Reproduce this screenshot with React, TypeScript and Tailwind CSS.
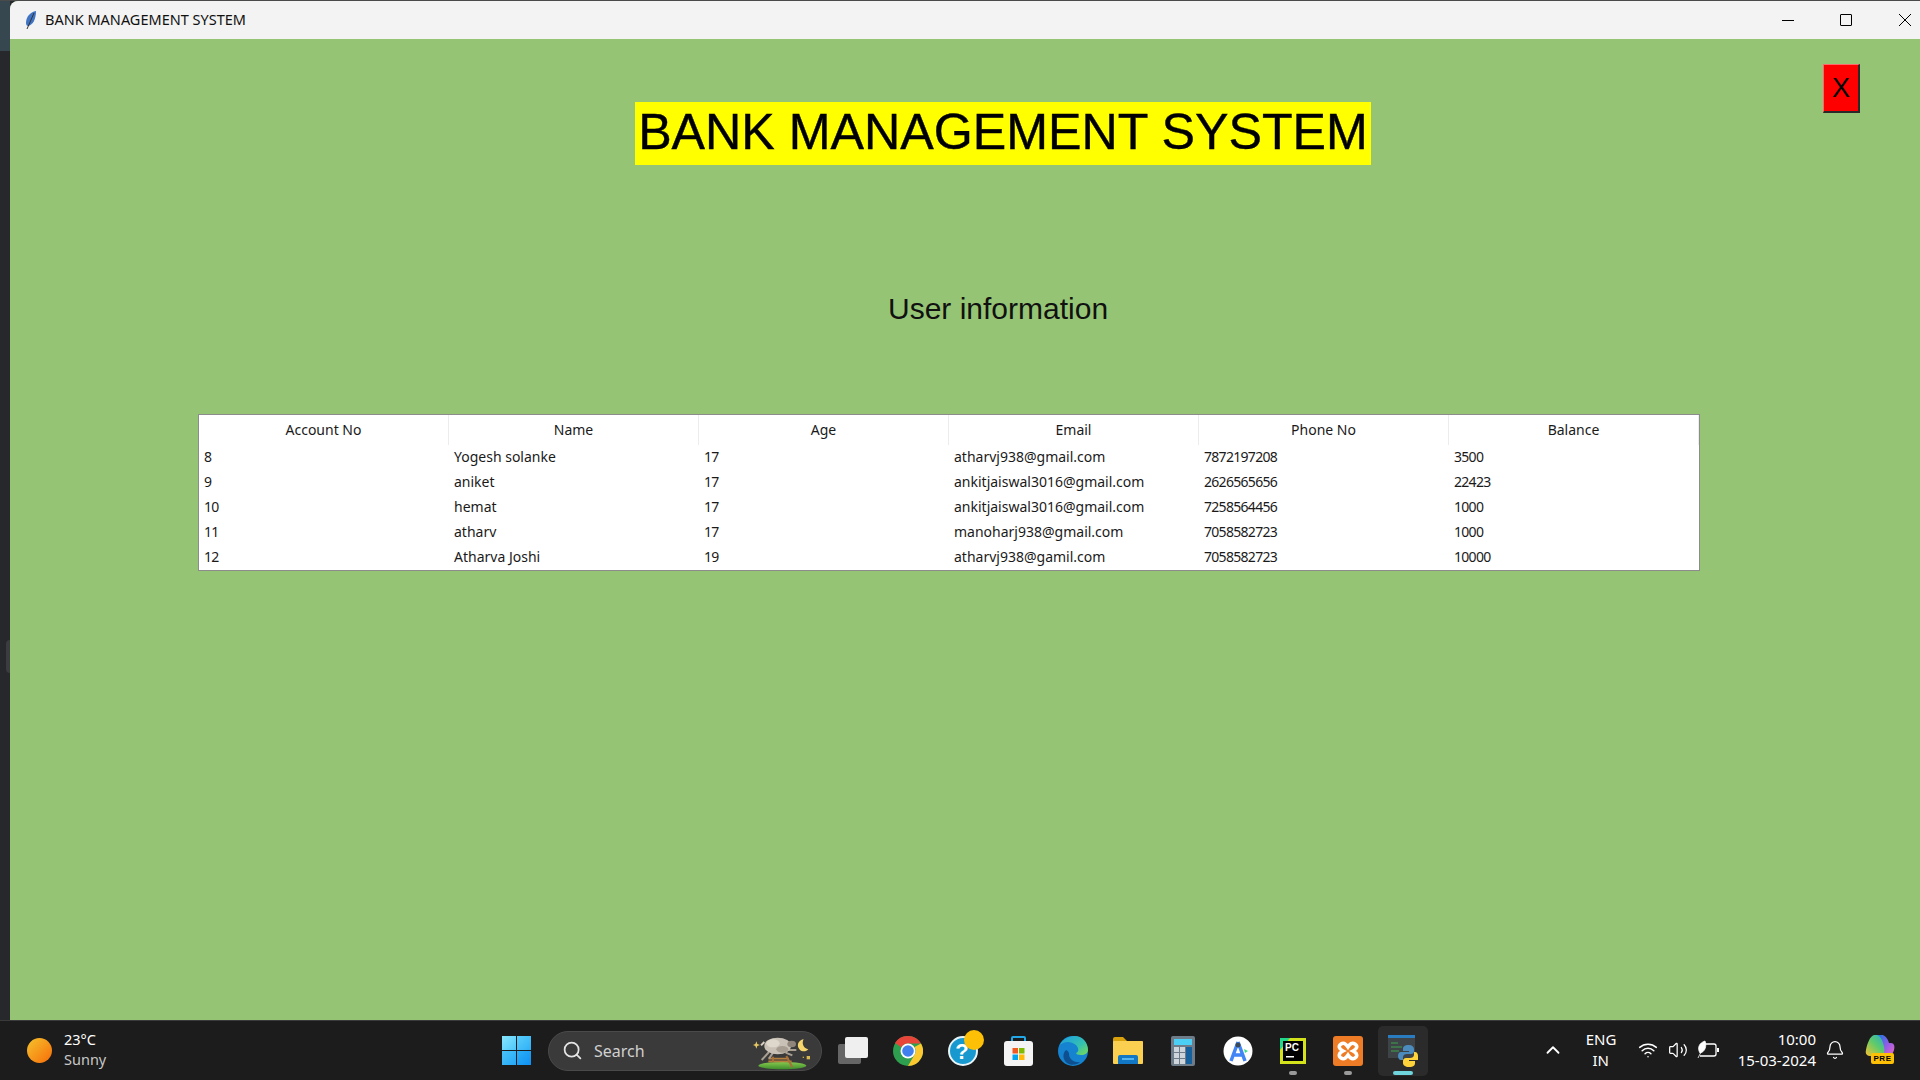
import type { ReactNode } from "react";
import { Bell, ChevronUp, Search, Volume2, Wifi } from "lucide-react";

const columns = ["Account No", "Name", "Age", "Email", "Phone No", "Balance"];

const rows = [
  ["8", "Yogesh solanke", "17", "atharvj938@gmail.com", "7872197208", "3500"],
  ["9", "aniket", "17", "ankitjaiswal3016@gmail.com", "2626565656", "22423"],
  ["10", "hemat", "17", "ankitjaiswal3016@gmail.com", "7258564456", "1000"],
  ["11", "atharv", "17", "manoharj938@gmail.com", "7058582723", "1000"],
  ["12", "Atharva Joshi", "19", "atharvj938@gamil.com", "7058582723", "10000"],
];

const Feather = () => (
  <svg width="14" height="20" viewBox="0 0 14 20">
    <path d="M12 1C6 2 2 7 2 13c0 2 1 3 2 3 5-1 8-7 8-15z" fill="#3f74c4" />
    <path d="M10 3 3 19" stroke="#333" strokeWidth="1" fill="none" />
  </svg>
);

const WinLogo = () => (
  <div className="grid grid-cols-2 gap-[1px] w-[29px] h-[29px]">
    <div className="bg-gradient-to-br from-[#86e6fd] to-[#4cc8fa]" />
    <div className="bg-gradient-to-br from-[#58cefb] to-[#2db0f7]" />
    <div className="bg-gradient-to-br from-[#48c4fa] to-[#25a8f6]" />
    <div className="bg-gradient-to-br from-[#2cb0f7] to-[#0f8ff3]" />
  </div>
);

const Sheep = () => (
  <svg width="60" height="35" viewBox="30 30 180 105">
    <defs>
      <linearGradient id="grass" x1="0" y1="0" x2="0" y2="1">
        <stop offset="0" stopColor="#86c94e" />
        <stop offset="1" stopColor="#3d8c2c" />
      </linearGradient>
    </defs>
    <ellipse cx="118" cy="119" rx="72" ry="11" fill="url(#grass)" />
    <path d="M76 98h62M76 106h70" stroke="#b57f3e" strokeWidth="5" fill="none" />
    <path d="M90 92v16M130 90l18 34" stroke="#a8703a" strokeWidth="6" fill="none" />
    <path d="M78 78 56 102M90 80 78 98M134 72l26 0M128 80l20 8" stroke="#a89e92" strokeWidth="6" fill="none" />
    <ellipse cx="104" cy="60" rx="40" ry="25" fill="#c9c1b6" />
    <ellipse cx="90" cy="52" rx="20" ry="12" fill="#ded7cc" />
    <ellipse cx="118" cy="70" rx="18" ry="10" fill="#a79d91" />
    <ellipse cx="146" cy="54" rx="13" ry="10" fill="#8f857b" />
    <path d="M64 48 54 58" stroke="#d8d0c4" strokeWidth="6" />
    <path d="M182 40a18 18 0 1 0 14 30 20 20 0 0 1-14-30z" fill="#f6d56c" />
    <path d="M40 46l3 8 8 3-8 3-3 8-3-8-8-3 8-3z" fill="#e8c860" />
    <rect x="191" y="90" width="10" height="10" fill="#d8b850" />
    <rect x="179" y="92" width="4" height="4" fill="#c8a840" />
  </svg>
);

const TaskView = () => (
  <svg width="30" height="27" viewBox="0 0 30 27">
    <rect x="0" y="7" width="23" height="20" rx="2" fill="#666666" />
    <rect x="7" y="0" width="23" height="21" rx="2" fill="#efefef" />
  </svg>
);

const Chrome = () => (
  <svg width="30" height="30" viewBox="0 0 30 30">
    <circle cx="15" cy="15" r="15" fill="#2e9e4f" />
    <path d="M15 0a15 15 0 0 1 13 7.500H15a7.500 7.500 0 0 0-6.500 3.750L2 7A15 15 0 0 1 15 0z" fill="#e8453a" />
    <path d="M28 7.500A15 15 0 0 1 15 30l6.500-11.250A7.500 7.500 0 0 0 21.500 11z" fill="#fbc92f" />
    <circle cx="15" cy="15" r="7.500" fill="#fff" />
    <circle cx="15" cy="15" r="5.800" fill="#3f80ee" />
  </svg>
);

const HelpBadge = () => (
  <div className="relative w-[30px] h-[30px]">
    <svg width="30" height="30" viewBox="0 0 30 30">
      <circle cx="15" cy="15" r="14" fill="#1798cf" stroke="#e9f4f8" strokeWidth="2" />
      <text x="14" y="23" textAnchor="middle" fontSize="22" fontWeight="700" fill="#fff" fontFamily="Liberation Sans, sans-serif">?</text>
    </svg>
    <div className="absolute left-[16px] top-[-6px] w-[20px] h-[20px] rounded-full bg-[#fdc006]" />
  </div>
);

const Store = () => (
  <svg width="29" height="30" viewBox="0 0 29 30">
    <path d="M8 7V2a1 1 0 0 1 1-1h11a1 1 0 0 1 1 1v5" stroke="#22a7e8" strokeWidth="2" fill="none" />
    <rect x="0" y="5" width="29" height="25" rx="3" fill="#f4f4f4" />
    <rect x="8.500" y="12" width="5.500" height="5.500" fill="#f05a22" />
    <rect x="15" y="12" width="5.500" height="5.500" fill="#80bb02" />
    <rect x="8.500" y="18.500" width="5.500" height="5.500" fill="#04a5f0" />
    <rect x="15" y="18.500" width="5.500" height="5.500" fill="#ffba08" />
  </svg>
);

const Edge = () => (
  <svg width="30" height="30" viewBox="0 0 30 30">
    <defs>
      <linearGradient id="edgeTop" x1="0" y1="0" x2="1" y2="1">
        <stop offset="0" stopColor="#1b9de2" />
        <stop offset="0.6" stopColor="#35c1b0" />
        <stop offset="1" stopColor="#7bdc4e" />
      </linearGradient>
    </defs>
    <circle cx="15" cy="15" r="15" fill="#1583cf" />
    <path d="M2 9C5 2 12 0 17 0c7 0 13 6 13 14 0 3-3 5-7 5-3 0-5-1-5-2 3-1 3-5 0-8C13 5 6 5 2 9z" fill="url(#edgeTop)" />
    <path d="M11 18c0 5 5 9 11 8-3 3-9 4-13 1-4-3-5-9-1-13 2 1 3 2 3 4z" fill="#0d4f8f" />
  </svg>
);

const Folder = () => (
  <svg width="30" height="27" viewBox="0 0 30 27">
    <path d="M0 2a2 2 0 0 1 2-2h8l4 4h14a2 2 0 0 1 2 2v4H0z" fill="#d9a20c" />
    <rect x="0" y="4" width="30" height="23" rx="1" fill="#fbcf4f" />
    <path d="M5 27v-7a2 2 0 0 1 2-2h16a2 2 0 0 1 2 2v7z" fill="#1277c4" />
    <rect x="9" y="21" width="12" height="2" fill="#52b5f2" />
  </svg>
);

const Calc = () => (
  <svg width="24" height="30" viewBox="0 0 24 30">
    <rect x="0" y="0" width="24" height="30" rx="2" fill="#6d7c88" />
    <rect x="3" y="3" width="18" height="6" fill="#4bcff5" />
    {[11, 17, 23].map((y) =>
      [3, 9].map((x) => <rect key={`${x}-${y}`} x={x} y={y} width="5" height="5" fill="#cfd6db" />)
    )}
    <rect x="15" y="11" width="6" height="17" fill="#17609e" />
  </svg>
);

const AndroidStudio = () => (
  <svg width="30" height="30" viewBox="0 0 30 30">
    <circle cx="15" cy="15" r="14.500" fill="#fff" />
    <path d="M15 6 8 25M15 6l7 19M10 19h10" stroke="#4285f4" strokeWidth="3.500" fill="none" />
    <circle cx="15" cy="9" r="2.500" fill="#3b4a5a" />
    <path d="M21 13l4 2-3 2z" fill="#3ddc84" />
  </svg>
);

const PyCharm = () => (
  <svg width="26" height="26" viewBox="0 0 26 26">
    <rect width="26" height="26" fill="#d4e21c" />
    <path d="M0 0h10L0 12z" fill="#21d789" />
    <rect x="3" y="3" width="20" height="20" fill="#000" />
    <rect x="6" y="18" width="8" height="1.500" fill="#fff" />
    <text x="5" y="13" fontSize="10" fontWeight="700" fill="#fff" fontFamily="Liberation Sans, sans-serif">PC</text>
  </svg>
);

const Xampp = () => (
  <svg width="30" height="30" viewBox="0 0 30 30">
    <rect width="30" height="30" rx="3" fill="#ee7c26" />
    <path d="M8 8c3-2 5 0 7 3 2-3 4-5 7-3s2 5-2 7c4 2 5 5 2 7s-5 0-7-3c-2 3-4 5-7 3s-2-5 2-7c-4-2-5-5-2-7z" fill="none" stroke="#fff" strokeWidth="3.500" />
  </svg>
);

const PyApp = () => (
  <svg width="30" height="32" viewBox="0 0 30 32">
    <rect x="0" y="0" width="27" height="23" fill="#3e4347" />
    <rect x="0" y="0" width="27" height="3" fill="#2a7cc0" />
    <path d="M3 8h7M3 12h11M3 16h8" stroke="#3fa34d" strokeWidth="1" />
    <path d="M21 10c-5 0-6 2-6 4v2h6v1h-8c-2 0-3 2-3 4s1 4 3 4h2v-3c0-2 2-3 4-3h4c2 0 3-1 3-3v-2c0-2-2-4-5-4z" fill="#4b8bbe" />
    <path d="M21 32c5 0 6-2 6-4v-2h-6v-1h8c2 0 1-2 1-4s-1-4-3-4h-1v3c0 2-2 3-4 3h-4c-2 0-3 1-3 3v2c0 2 2 4 6 4z" fill="#ffd43b" />
  </svg>
);

const Battery = () => (
  <svg width="22" height="20" viewBox="0 0 22 20">
    <path d="M8 4h9a2 2 0 0 1 2 2v8a2 2 0 0 1-2 2H3" stroke="#fff" strokeWidth="1.300" fill="none" />
    <rect x="20" y="8" width="2" height="4" fill="#fff" />
    <path d="M8 1C2 3 0 8 3 13c5-1 7-7 5-12zM1 18l5-10" fill="#fff" stroke="#fff" strokeWidth="0.800" />
  </svg>
);

const Copilot = () => (
  <div className="relative w-[30px] h-[29px]">
    <svg width="30" height="24" viewBox="0 0 30 24">
      <defs>
        <linearGradient id="cpA" x1="0" y1="1" x2="1" y2="0">
          <stop offset="0" stopColor="#f8c22e" />
          <stop offset="0.5" stopColor="#5ecb6b" />
          <stop offset="1" stopColor="#1fa9d8" />
        </linearGradient>
        <linearGradient id="cpB" x1="0" y1="0" x2="1" y2="1">
          <stop offset="0" stopColor="#1577e0" />
          <stop offset="0.55" stopColor="#9a5ce6" />
          <stop offset="1" stopColor="#f06cc0" />
        </linearGradient>
      </defs>
      <path d="M9 0h9l4 21H6C2 21 0 19 1 15 2 9 5 1 9 0z" fill="url(#cpA)" />
      <path d="M12 0h5c3 0 6 4 7 8h2c3 0 4 3 3 7-1 3-3 7-6 7h-6c3-3 3-9 1-14-1-4-3-7-6-8z" fill="url(#cpB)" />
    </svg>
    <div className="absolute left-[6px] bottom-0 w-[23px] h-[11px] rounded-[2px] bg-[#fdc006] flex items-center justify-center text-[8px] leading-none font-bold text-black tracking-[0.5px] font-['Liberation_Sans',sans-serif]">
      PRE
    </div>
  </div>
);

const TaskIcon = ({ children, dot, active }: { children: ReactNode; dot?: boolean; active?: boolean }) => (
  <div
    className={`relative flex items-center justify-center w-[50px] h-[50px] mr-[5px] rounded-[5px] ${
      active ? "bg-[#2b2b2b]" : ""
    }`}
  >
    {children}
    {dot && <div className="absolute bottom-[1px] left-1/2 -translate-x-1/2 w-[8px] h-[4px] rounded-full bg-[#9a9a9a]" />}
    {active && <div className="absolute bottom-[1px] left-1/2 -translate-x-1/2 w-[20px] h-[4px] rounded-full bg-[#6fd4dc]" />}
  </div>
);

const App = () => {
  return (
    <div className="flex flex-col w-[1920px] h-[1080px] overflow-hidden bg-[#1c1c1c] font-['Noto_Sans',sans-serif]">
      <div className="flex flex-1 min-h-0 bg-[#26282c] border-t border-[#4a4a4a]">
        {/* desktop edge behind the window */}
        <div className="flex flex-col w-[10px] shrink-0">
          <div className="h-[50px] bg-[#37474f]" />
          <div className="ml-[6px] mt-[589px] w-[4px] h-[33px] rounded-l bg-[#3a3c40]" />
        </div>

        <div className="flex flex-col flex-1 min-w-0 bg-[#95c574] rounded-tl-[8px] overflow-hidden">
          <div className="flex items-center h-[38px] shrink-0 bg-[#f3f3f3] pl-[14px]">
            <Feather />
            <span className="ml-[7px] mb-[2px] text-[14.500px] text-[#111] leading-none">BANK MANAGEMENT SYSTEM</span>
            <div className="flex items-center ml-auto text-black">
              <div className="w-[12px] h-[1px] bg-black mr-[46px]" />
              <div className="w-[12px] h-[12px] border border-black rounded-[1px] mr-[46px]" />
              <svg width="14" height="14" viewBox="0 0 14 14" className="mr-[8px]">
                <path d="M1 1l12 12M13 1 1 13" stroke="#000" strokeWidth="1" />
              </svg>
            </div>
          </div>

          <div className="flex items-start pt-[25px] font-['Liberation_Sans',sans-serif]">
            <h1 className="ml-[625px] mt-[38px] h-[63px] w-[736px] pb-[2px] flex items-center justify-center bg-[#ffff00] text-[50.200px] leading-none text-black font-normal whitespace-nowrap [-webkit-text-stroke:0.4px_#000]">
              BANK MANAGEMENT SYSTEM
            </h1>
            <button className="ml-auto mr-[60px] w-[37px] h-[49px] bg-[#ff0000] text-[27px] leading-none text-black border border-t-[#ff6a6a] border-l-[#ff6a6a] border-r-[2px] border-b-[2px] border-r-[#2a2a2a] border-b-[#2a2a2a]">
              X
            </button>
          </div>

          <p className="ml-[878px] mt-[126px] text-[30px] leading-[36px] text-[#111] font-['Liberation_Sans',sans-serif]">
            User information
          </p>

          <div className="ml-[188px] mt-[87px] w-[1502px] h-[157px] bg-white border border-[#8c8c8c] text-[14px] text-[#1a1a1a]">
            <div className="grid grid-cols-6 h-[30px] items-center">
              {columns.map((col) => (
                <div key={col} className="h-full pb-[2px] flex items-center justify-center border-r border-[#ececec]">
                  {col}
                </div>
              ))}
            </div>
            {rows.map((row) => (
              <div key={row[0]} className="grid grid-cols-6 h-[25px] pb-[2px] items-center">
                {row.map((cell, i) => (
                  <div
                    key={i}
                    className={`pl-[5px] whitespace-nowrap ${
                      i === 1 || i === 3 ? "" : "tracking-[-0.7px]"
                    }`}
                  >
                    {cell}
                  </div>
                ))}
              </div>
            ))}
          </div>
        </div>
      </div>

      {/* taskbar */}
      <div className="flex items-center h-[60px] shrink-0 bg-[#1c1c1c] border-t border-[#3a3a3a] text-white">
        <div className="flex items-center w-[491px] shrink-0 pl-[27px]">
          <div className="w-[25px] h-[25px] rounded-full bg-gradient-to-br from-[#f4c22b] to-[#f46a06]" />
          <div className="ml-[12px] mb-[3px] text-[14.500px] leading-[20px]">
            <div>23°C</div>
            <div className="text-[#c8c8c8]">Sunny</div>
          </div>
        </div>

        <div className="flex items-center">
          <div className="flex items-center justify-center w-[50px] h-[50px] mr-[7px]">
            <WinLogo />
          </div>
          <div className="flex items-center w-[274px] h-[40px] rounded-full bg-[#3a3a3a] border border-[#4a4a4a] pl-[13px] mr-[6px]">
            <Search size={21} strokeWidth={2} className="text-[#e4e4e4]" />
            <span className="ml-[11px] text-[16px] text-[#d0d0d0]">Search</span>
            <div className="ml-auto mr-[8px] mt-[5px]">
              <Sheep />
            </div>
          </div>
          <TaskIcon><TaskView /></TaskIcon>
          <TaskIcon><Chrome /></TaskIcon>
          <TaskIcon><HelpBadge /></TaskIcon>
          <TaskIcon><Store /></TaskIcon>
          <TaskIcon><Edge /></TaskIcon>
          <TaskIcon><Folder /></TaskIcon>
          <TaskIcon><Calc /></TaskIcon>
          <TaskIcon><AndroidStudio /></TaskIcon>
          <TaskIcon dot><PyCharm /></TaskIcon>
          <TaskIcon dot><Xampp /></TaskIcon>
          <TaskIcon active><PyApp /></TaskIcon>
        </div>

        <div className="flex items-center ml-auto mb-[2px]">
          <ChevronUp size={22} strokeWidth={2} className="text-white mr-[22px]" />
          <div className="w-[30px] text-[15px] leading-[21px] text-center mr-[22px]">
            <div>ENG</div>
            <div>IN</div>
          </div>
          <Wifi size={20} strokeWidth={1.8} className="mr-[10px]" />
          <Volume2 size={20} strokeWidth={1.5} className="mr-[9px]" />
          <Battery />
          <div className="ml-[19px] text-[15px] leading-[21px] text-right">
            <div>10:00</div>
            <div>15-03-2024</div>
          </div>
          <Bell size={20} strokeWidth={1.5} className="ml-[9px] mr-[20px]" />
          <div className="mr-[25px]">
            <Copilot />
          </div>
        </div>
      </div>
    </div>
  );
};

export default App;
